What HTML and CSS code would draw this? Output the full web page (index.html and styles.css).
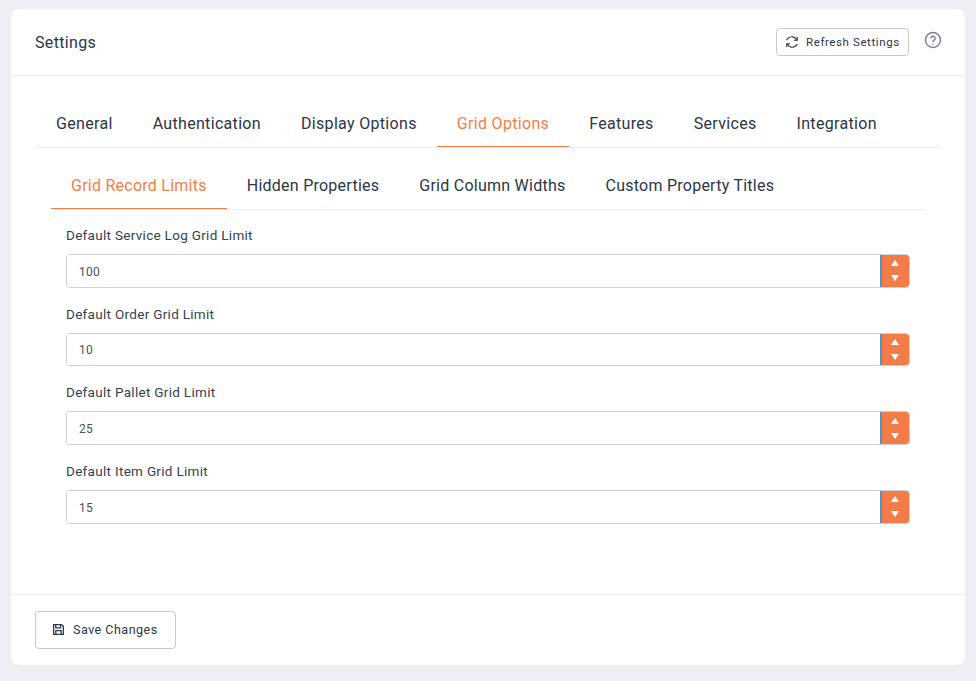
FILE: index.html
```html
<!DOCTYPE html>
<html lang="en">
<head>
    <meta charset="UTF-8">
    <meta name="viewport" content="width=device-width, initial-scale=1.0">
    <title>Settings</title>
    <link rel="stylesheet" href="styles.css">
</head>
<body>
    <div class="card">
        <div class="card-header">
            <h1 class="card-title">Settings</h1>
            <button class="btn btn-refresh">
                <svg class="icon" width="14" height="14" viewBox="0 0 24 24" fill="none" stroke="#2f3a4f" stroke-width="2" stroke-linecap="round" stroke-linejoin="round"><path d="M21 4v5h-5"/><path d="M3 20v-5h5"/><path d="M20.2 9A9 9 0 0 0 5.4 5.6L3 8"/><path d="M3.8 15a9 9 0 0 0 14.8 3.4L21 16"/></svg>
                <span>Refresh Settings</span>
            </button>
            <svg class="help" width="18" height="18" viewBox="0 0 24 24" fill="none" stroke="#7d8299" stroke-width="2" stroke-linecap="round" stroke-linejoin="round"><circle cx="12" cy="12" r="10"/><path d="M9.1 9a3 3 0 0 1 5.8 1c0 2-3 2.6-3 4"/><path d="M12 17.5h.01"/></svg>
        </div>

        <div class="card-body">
            <ul class="tabs">
                <li>General</li>
                <li>Authentication</li>
                <li>Display Options</li>
                <li class="active">Grid Options</li>
                <li>Features</li>
                <li>Services</li>
                <li>Integration</li>
            </ul>
            <ul class="tabs tabs-sub">
                <li class="active">Grid Record Limits</li>
                <li>Hidden Properties</li>
                <li>Grid Column Widths</li>
                <li>Custom Property Titles</li>
            </ul>

            <div class="fields">
                <div class="field">
                    <label>Default Service Log Grid Limit</label>
                    <div class="spinner">
                        <input type="text" value="100">
                        <div class="spin-btns"><span class="up"></span><span class="down"></span></div>
                    </div>
                </div>
                <div class="field">
                    <label>Default Order Grid Limit</label>
                    <div class="spinner">
                        <input type="text" value="10">
                        <div class="spin-btns"><span class="up"></span><span class="down"></span></div>
                    </div>
                </div>
                <div class="field">
                    <label>Default Pallet Grid Limit</label>
                    <div class="spinner">
                        <input type="text" value="25">
                        <div class="spin-btns"><span class="up"></span><span class="down"></span></div>
                    </div>
                </div>
                <div class="field">
                    <label>Default Item Grid Limit</label>
                    <div class="spinner">
                        <input type="text" value="15">
                        <div class="spin-btns"><span class="up"></span><span class="down"></span></div>
                    </div>
                </div>
            </div>
        </div>

        <div class="card-footer">
            <button class="btn btn-save">
                <svg class="icon" width="13" height="13" viewBox="0 0 24 24" fill="none" stroke="#2f3a4f" stroke-width="2.4" stroke-linejoin="round"><path d="M3 3h15l3 3v15H3z"/><path d="M7 3v6h9V3"/><path d="M7 21v-7h10v7"/></svg>
                <span>Save Changes</span>
            </button>
        </div>
    </div>
</body>
</html>
```

FILE: styles.css
```css
* {
    box-sizing: border-box;
}
body {
    margin: 0;
    height: 681px;
    overflow: hidden;
    padding: 9px 11px 16px;
    background-color: #eeeef5;
    font-family: Roboto, "Noto Sans", sans-serif;
    color: #2b3648;
}
.card {
    height: 656px;
    background-color: #fff;
    border-radius: 8px;
    display: flex;
    flex-direction: column;
}
.card-header {
    height: 67px;
    flex: none;
    display: flex;
    align-items: center;
    padding: 0 24px;
    border-bottom: 1px solid #ebedf3;
}
.card-title {
    margin: 0 auto 0 0;
    font-size: 16px;
    font-weight: 400;
    letter-spacing: 0.35px;
}
.btn {
    display: flex;
    align-items: center;
    white-space: nowrap;
    background-color: #fff;
    border: 1px solid #c9c9c9;
    border-radius: 4px;
    font-family: inherit;
    color: #2b3648;
    letter-spacing: 0.6px;
}
.btn .icon {
    flex: none;
}
.btn-refresh {
    width: 133px;
    height: 28px;
    margin-top: -1px;
    padding: 0 8px;
    gap: 7px;
    font-size: 11.5px;
}
.help {
    margin-left: 15px;
    margin-top: -4px;
    margin-right: -1px;
}
.card-body {
    flex: 1;
    padding: 25px 25px 0;
}
.tabs {
    list-style: none;
    margin: 0;
    padding: 0;
    display: flex;
    height: 47px;
    border-bottom: 1px solid #ebedf3;
    font-size: 16px;
    letter-spacing: 0.32px;
}
.tabs li {
    padding: 13px 20px 0;
    height: 46px;
}
.tabs .active {
    color: #f47c48;
    border-bottom: 1px solid #f47c48;
}
.tabs-sub {
    margin: 15px 15px 0;
    letter-spacing: 0.25px;
}
.fields {
    padding: 0 15px;
    margin: 16px 0 0 15px;
}
.field {
    margin-bottom: 17px;
    margin-right: 15px;
}
.field label {
    display: block;
    font-size: 13.5px;
    letter-spacing: 0.3px;
    line-height: 18px;
    margin-bottom: 10px;
    color: #353f52;
}
.spinner {
    display: flex;
    height: 33.67px;
    border: 1px solid #cfcfd8;
    border-radius: 4px;
    overflow: hidden;
}
.spinner input {
    flex: 1;
    min-width: 0;
    border: none;
    outline: none;
    padding: 2px 12px 0;
    font-family: inherit;
    font-size: 12px;
    letter-spacing: 0.3px;
    color: #4a5060;
}
.spin-btns {
    width: 29px;
    flex: none;
    padding-right: 1px;
    background-color: #f47c48;
    border-left: 2px solid #4f96c4;
    display: flex;
    flex-direction: column;
    align-items: center;
    justify-content: center;
    gap: 9px;
}
.spin-btns span {
    width: 0;
    height: 0;
    border-left: 4.5px solid transparent;
    border-right: 4.5px solid transparent;
}
.spin-btns .up {
    border-bottom: 6.5px solid #fff;
}
.spin-btns .down {
    border-top: 6.5px solid #fff;
}
.card-footer {
    height: 71px;
    flex: none;
    padding: 16px 24px 0;
    border-top: 1px solid #ebedf3;
}
.btn-save {
    width: 141px;
    height: 38px;
    padding: 0 16px 2px;
    gap: 8px;
    font-size: 12.5px;
    letter-spacing: 0.5px;
}
```
